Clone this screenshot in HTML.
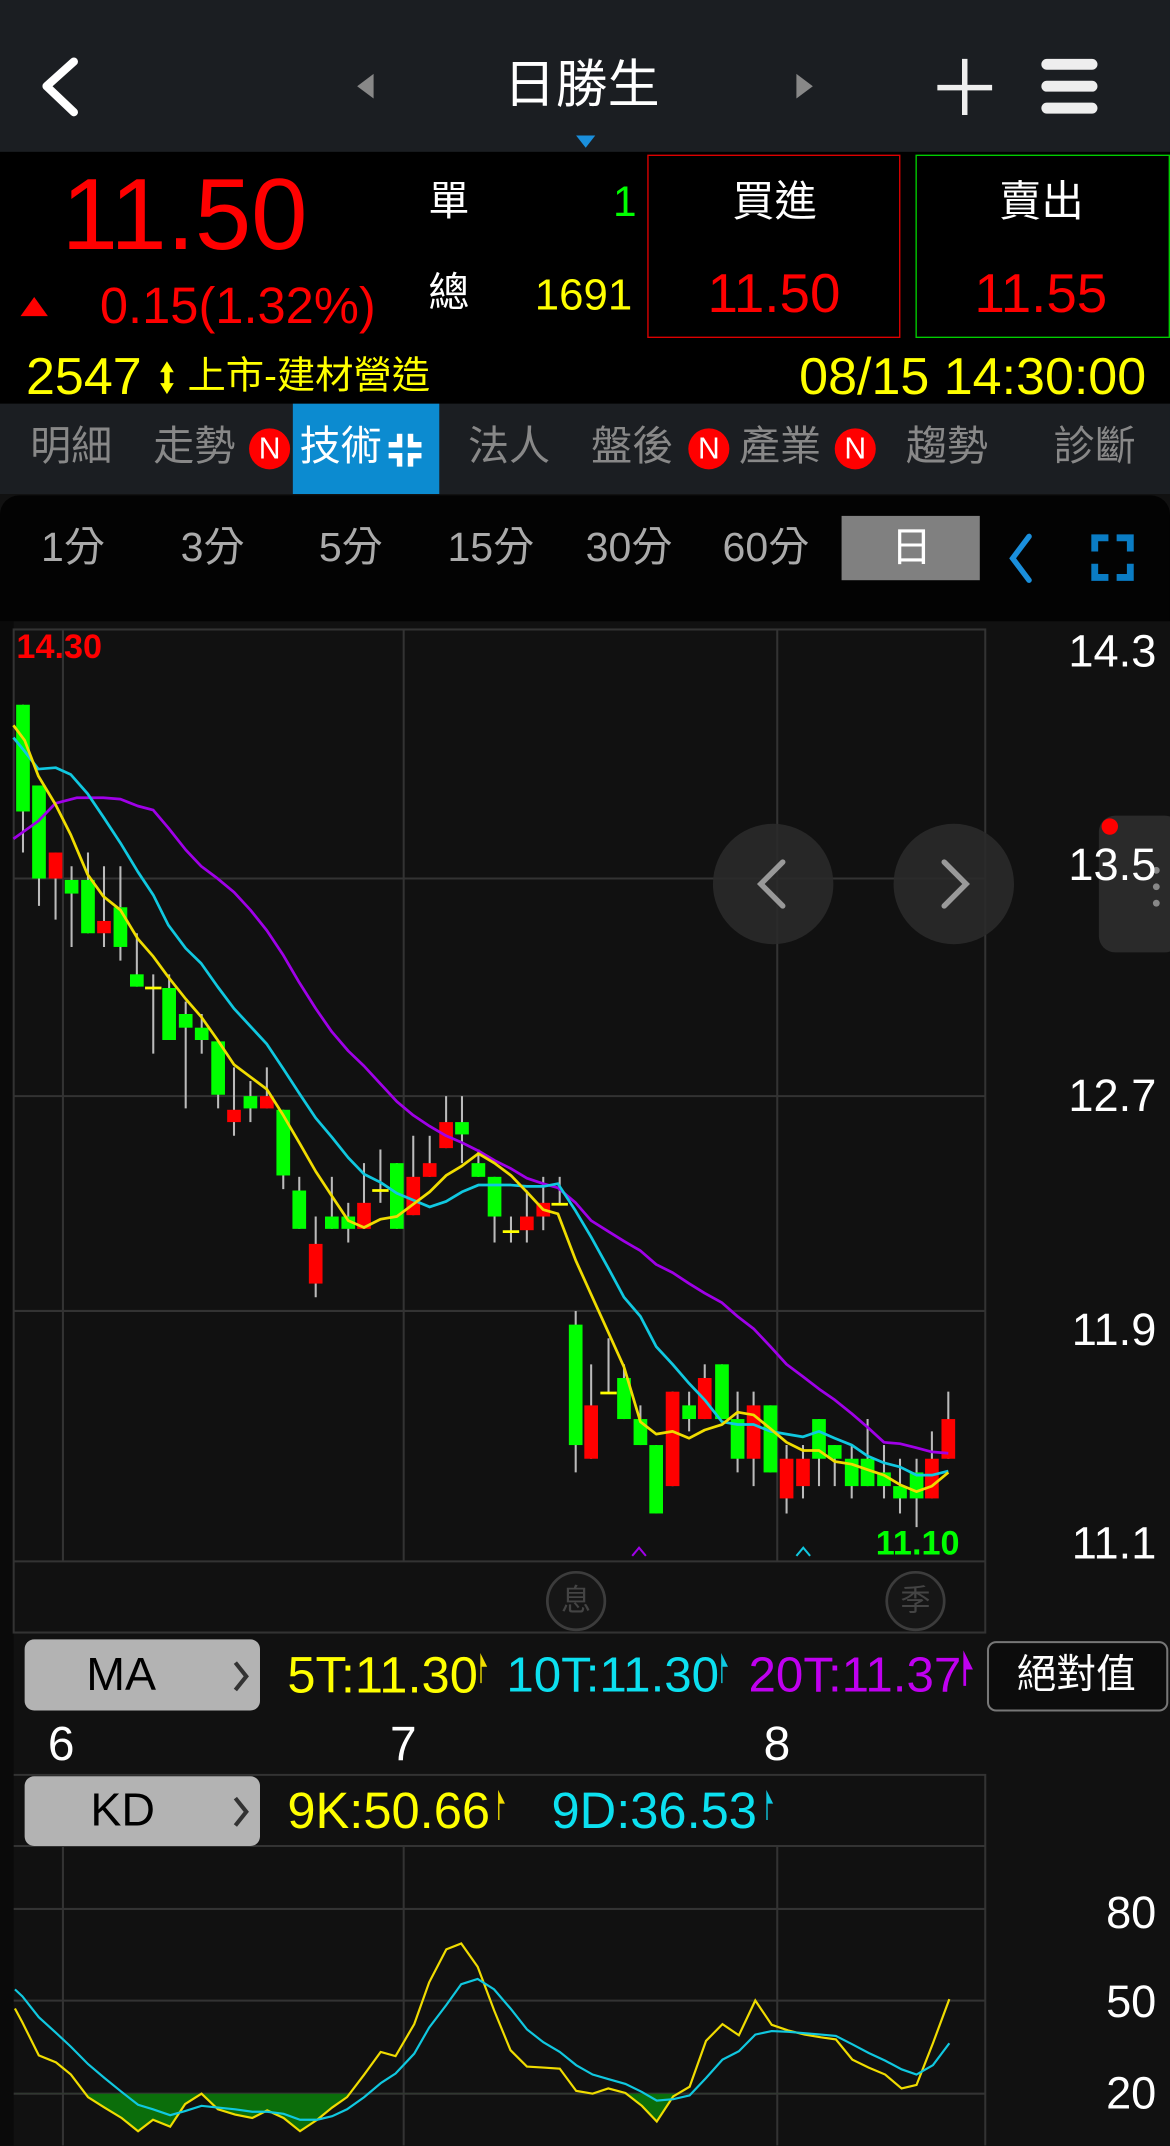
<!DOCTYPE html>
<html><head><meta charset="utf-8"><style>
html,body{margin:0;padding:0;background:#111;width:1170px;height:2145px;overflow:hidden}
#r{position:absolute;left:0;top:0;width:855px;height:1568px;transform:scale(1.368421);transform-origin:0 0;background:#111;font-family:"Liberation Sans","Noto Sans CJK TC",sans-serif;overflow:hidden}
.t{position:absolute;line-height:1;white-space:nowrap}
.n{position:absolute;width:30px;height:30px;border-radius:50%;background:#f00;color:#fff;font-size:22px;line-height:30px;text-align:center}
</style></head><body><div id="r">
<!-- header -->
<div style="position:absolute;left:0;top:0;width:855px;height:111px;background:#1b1e22"></div>
<svg style="position:absolute;left:0;top:0" width="855" height="111">
<path d="M54 45 L34 63 L54 82" stroke="#fff" stroke-width="6" fill="none" stroke-linecap="round" stroke-linejoin="round"/>
<path d="M273 54 L261 63 L273 72Z" fill="#888"/>
<path d="M582 54 L594 63 L582 72Z" fill="#888"/>
<path d="M705 43 V84 M685 64 H725" stroke="#eee" stroke-width="4"/>
<path d="M765 47 H798 M765 63 H798 M765 79 H798" stroke="#eee" stroke-width="8" stroke-linecap="round"/>
<path d="M421 99 H435 L428 108Z" fill="#1a8fdc"/>
</svg>
<div class="t" style="left:368px;top:44px;font-size:38px;color:#fff">日勝生</div>
<!-- quote -->
<div style="position:absolute;left:0;top:111px;width:855px;height:184px;background:#000"></div>
<div class="t" style="left:45px;top:120px;font-size:74px;color:#f00">11.50</div>
<svg style="position:absolute;left:14px;top:216px" width="22" height="16"><path d="M11 1 L21 15 H1Z" fill="#f00"/></svg>
<div class="t" style="left:73px;top:205px;font-size:37px;color:#f00">0.15(1.32%)</div>
<div class="t" style="left:313px;top:133px;font-size:30px;color:#fff">單</div>
<div class="t" style="left:448px;top:132px;font-size:31px;color:#0f0">1</div>
<div class="t" style="left:313px;top:200px;font-size:30px;color:#fff">總</div>
<div class="t" style="right:393px;top:199px;font-size:32px;color:#ff0">1691</div>
<div style="position:absolute;left:473px;top:113px;width:185px;height:134px;border:1px solid #d00;box-sizing:border-box"></div>
<div style="position:absolute;left:669px;top:113px;width:186px;height:134px;border:1px solid #0c0;box-sizing:border-box"></div>
<div class="t" style="left:535px;top:132px;font-size:31px;color:#fff">買進</div>
<div class="t" style="left:517px;top:195px;font-size:40px;color:#f00">11.50</div>
<div class="t" style="left:730px;top:132px;font-size:31px;color:#fff">賣出</div>
<div class="t" style="left:712px;top:195px;font-size:40px;color:#f00">11.55</div>
<div class="t" style="left:19px;top:257px;font-size:38px;color:#ff0">2547</div>
<svg style="position:absolute;left:115px;top:263px" width="14" height="26"><path d="M7 1 L12 9 H2Z M7 25 L12 17 H2Z" fill="#ff0"/><rect x="5" y="8" width="4" height="10" fill="#ff0"/></svg>
<div class="t" style="left:137px;top:261px;font-size:28px;color:#ff0">上市-建材營造</div>
<div class="t" style="left:584px;top:257px;font-size:38px;color:#ff0">08/15 14:30:00</div>
<!-- tabs -->
<div style="position:absolute;left:0;top:295px;width:855px;height:66px;background:#1b1e22"></div>
<div style="position:absolute;left:214px;top:295px;width:107px;height:66px;background:#0c8bd0"></div>
<div class="t" style="left:22px;top:312px;font-size:30px;color:#888">明細</div>
<div class="t" style="left:112px;top:312px;font-size:30px;color:#888">走勢</div>
<div class="n" style="left:182px;top:313px">N</div>
<div class="t" style="left:219px;top:312px;font-size:30px;color:#fff">技術</div>
<svg style="position:absolute;left:282px;top:315px" width="28" height="28"><path d="M10 2 V10 H2 M18 2 V10 H26 M10 26 V18 H2 M18 26 V18 H26" stroke="#fff" stroke-width="4" fill="none"/></svg>
<div class="t" style="left:342px;top:312px;font-size:30px;color:#888">法人</div>
<div class="t" style="left:432px;top:312px;font-size:30px;color:#888">盤後</div>
<div class="n" style="left:503px;top:313px">N</div>
<div class="t" style="left:540px;top:312px;font-size:30px;color:#888">產業</div>
<div class="n" style="left:610px;top:313px">N</div>
<div class="t" style="left:662px;top:312px;font-size:30px;color:#888">趨勢</div>
<div class="t" style="left:770px;top:312px;font-size:30px;color:#888">診斷</div>
<!-- period -->
<div style="position:absolute;left:0;top:362px;width:855px;height:92px;background:#030303;border-radius:14px 14px 0 0"></div>
<div style="position:absolute;left:615px;top:377px;width:101px;height:47px;background:#808080"></div>
<div class="t" style="left:30px;top:386px;font-size:30px;color:#aaa">1分</div>
<div class="t" style="left:132px;top:386px;font-size:30px;color:#aaa">3分</div>
<div class="t" style="left:233px;top:386px;font-size:30px;color:#aaa">5分</div>
<div class="t" style="left:327px;top:386px;font-size:30px;color:#aaa">15分</div>
<div class="t" style="left:428px;top:386px;font-size:30px;color:#aaa">30分</div>
<div class="t" style="left:528px;top:386px;font-size:30px;color:#aaa">60分</div>
<div class="t" style="left:651px;top:386px;font-size:30px;color:#fff">日</div>
<svg style="position:absolute;left:730px;top:385px" width="100" height="45">
<path d="M22 7 L10 23 L22 39" stroke="#1a8fdc" stroke-width="4" fill="none" stroke-linecap="round"/>
<path d="M70 18 V8 H80 M96 18 V8 H86 M70 27 V37 H80 M96 27 V37 H86" stroke="#0a7cc4" stroke-width="5" fill="none"/>
</svg>
<!-- chart -->
<svg style="position:absolute;left:0;top:0" width="855" height="1568">
<rect x="0" y="454" width="10" height="1114" fill="#0a0a0a"/>
<g stroke="#333" stroke-width="1.5" fill="none">
<rect x="10" y="460" width="710" height="733"/>
<path d="M10 642 H720 M10 801 H720 M10 958 H720 M10 1141 H720 M46 460 V1141 M295 460 V1141 M568 460 V1141"/>
<path d="M10 1297 H720 V1568 M10 1349 H720 M10 1395 H720 M10 1462 H720 M10 1530 H720 M46 1349 V1568 M295 1349 V1568 M568 1349 V1568"/>
</g>
<g id="c"></g>
<g fill="none" stroke-width="2" stroke-linejoin="round">
<polyline stroke="#a000e8" points="9.8,613 28,600 40.6,587 56,583 75.5,583 88,584 100.7,589 112,592 123,605 135.7,621 147,633 159,642 171,652 183,665 195,680 207,698 218.7,718 230.7,737 242.5,754 254.5,768 266,779 278,792 290,805 302,815 314,823 326,830 337.6,835 349.6,841 361.4,848 373.4,854 385,861 397,865 407.7,868 420.7,879 432,892 444.7,900 456,907 468,914 479.5,924 491.5,930 503.6,938 515,945 527.6,952 539,962 550.7,971 563,984 574.8,997 586.8,1006 598.5,1015 610,1023 622.4,1033 634,1043 646,1054 657.7,1055 669.8,1058 681,1061 693,1062"/>
<polyline stroke="#10c8e0" points="9.8,539 18,549 28,562 40.6,561 51.7,566 64,580 75.5,597 88,616 100.7,637 112,654 123,676 135.7,693 147,704 159,721 171,737 183,750 195,763 207,781 218.7,799 230.7,817 242.5,831 254.5,846 266,858 278,864 290,872 302,877 314,882 326,878 337.6,871 349.6,866 361.4,866 373.4,866 385,867 397,867 407.7,865 420.7,885 432,904 444.7,927 456,948 468,962 479.5,984 491.5,997 503.6,1011 515,1023 527.6,1039 539,1041 550.7,1041 563,1046 574.8,1048 586.8,1050 598.5,1046 610,1051 622.4,1056 634,1064 646,1069 657.7,1072 669.8,1078 681,1078 693,1075"/>
<polyline stroke="#f0dc00" points="9.8,530 18,541 28,567 40.6,588 51.7,610 64,639 75.5,655 88,665 100.7,686 112,699 123,714 135.7,730 147,743 159,760 171,778 183,787 195,796 207,815 218.7,835 230.7,856 242.5,874 254.5,892 266,897 278,891 290,889 302,880 314,871 326,859 337.6,852 349.6,843 361.4,850 373.4,859 385,871 397,884 407.7,887 420.7,921 432,946 444.7,974 456,999 468,1039 479.5,1048 491.5,1046 503.6,1051 515,1045 527.6,1041 539,1032 550.7,1034 563,1044 574.8,1054 586.8,1060 598.5,1060 610,1068 622.4,1070 634,1074 646,1078 657.7,1085 669.8,1090 681,1086 693,1076"/>
</g>
<path d="M462 1137 L467 1131 L472 1137" stroke="#a000e8" stroke-width="1.5" fill="none"/>
<path d="M582 1137 L587 1131 L592 1137" stroke="#10c8e0" stroke-width="1.5" fill="none"/>
<circle cx="565" cy="646" r="44" fill="#2a2a2a" opacity="0.9"/>
<circle cx="697" cy="646" r="44" fill="#2a2a2a" opacity="0.9"/>
<path d="M572 630 L556 646 L572 662" stroke="#999" stroke-width="4" fill="none" stroke-linecap="round"/>
<path d="M690 630 L706 646 L690 662" stroke="#999" stroke-width="4" fill="none" stroke-linecap="round"/>
<rect x="803" y="596" width="60" height="100" rx="12" fill="#2a2a2a"/>
<circle cx="811" cy="604" r="6" fill="#f00"/>
<circle cx="845" cy="636" r="2.5" fill="#888"/><circle cx="845" cy="648" r="2.5" fill="#888"/><circle cx="845" cy="660" r="2.5" fill="#888"/>
<circle cx="421" cy="1170" r="21" fill="#161616" stroke="#3c3c3c" stroke-width="2"/>
<circle cx="669" cy="1170" r="21" fill="#161616" stroke="#3c3c3c" stroke-width="2"/>
<!-- KD -->
<defs><clipPath id="kc"><rect x="0" y="1420" width="1400" height="300"/></clipPath></defs>
<g transform="translate(0,1169.3) scale(0.5454,0.254)">
<polygon clip-path="url(#kc)" fill="#0b6e0b" points="20,1420 20,1175 30,1215 52,1310 75,1330 95,1365 118,1430 140,1460 163,1490 185,1528 205,1495 228,1515 248,1450 270,1420 292,1465 315,1480 338,1490 358,1468 380,1490 402,1528 425,1495 445,1460 465,1430 488,1365 510,1300 530,1312 555,1220 575,1100 598,1005 618,988 640,1055 662,1180 684,1295 706,1342 728,1345 750,1348 772,1412 794,1420 815,1405 838,1418 860,1455 880,1500 902,1428 924,1400 946,1268 968,1220 990,1252 1012,1152 1034,1222 1056,1238 1078,1250 1100,1258 1120,1264 1142,1322 1164,1345 1186,1365 1208,1405 1228,1395 1250,1275 1272,1148 1272,1420"/>
<polyline fill="none" stroke="#f0dc00" stroke-width="1.6" vector-effect="non-scaling-stroke" points="20,1175 30,1215 52,1310 75,1330 95,1365 118,1430 140,1460 163,1490 185,1528 205,1495 228,1515 248,1450 270,1420 292,1465 315,1480 338,1490 358,1468 380,1490 402,1528 425,1495 445,1460 465,1430 488,1365 510,1300 530,1312 555,1220 575,1100 598,1005 618,988 640,1055 662,1180 684,1295 706,1342 728,1345 750,1348 772,1412 794,1420 815,1405 838,1418 860,1455 880,1500 902,1428 924,1400 946,1268 968,1220 990,1252 1012,1152 1034,1222 1056,1238 1078,1250 1100,1258 1120,1264 1142,1322 1164,1345 1186,1365 1208,1405 1228,1395 1250,1275 1272,1148"/>
<polyline fill="none" stroke="#10c8e0" stroke-width="1.6" vector-effect="non-scaling-stroke" points="20,1120 30,1140 52,1200 75,1245 95,1285 118,1335 140,1375 163,1415 185,1452 205,1465 228,1482 248,1470 270,1455 292,1460 315,1465 338,1472 358,1472 380,1478 402,1495 425,1495 445,1485 465,1465 488,1430 510,1390 530,1362 555,1305 575,1230 598,1165 618,1105 640,1090 662,1120 684,1175 706,1235 728,1272 750,1300 772,1338 794,1365 815,1378 838,1392 860,1415 880,1440 902,1436 924,1425 946,1375 968,1322 990,1298 1012,1250 1034,1240 1056,1242 1078,1246 1100,1250 1120,1254 1142,1278 1164,1303 1186,1325 1208,1350 1228,1365 1250,1338 1272,1275"/>
</g>
<rect x="18" y="1198" width="172" height="52" rx="7" fill="#b3b3b3"/>
<rect x="18" y="1298" width="172" height="51" rx="7" fill="#b3b3b3"/>
<path d="M172 1215 L180 1225 L172 1235 M172 1314 L180 1324 L172 1334" stroke="#333" stroke-width="3" fill="none"/>
<rect x="722" y="1200" width="131" height="50" rx="6" fill="#0c0c0c" stroke="#777" stroke-width="1.5"/>
<g fill="#f0dc00"><path d="M351 1208 L356 1218 H352 V1230 H351Z"/><path d="M364 1308 L369 1318 H365 V1330 H364Z"/></g>
<g fill="#10c8e0"><path d="M527 1208 L532 1218 H528 V1230 H527Z"/><path d="M560 1308 L565 1318 H561 V1330 H560Z"/></g>
<path d="M704 1206 L711 1220 H706 V1232 H704Z" fill="#c000f0"/>
</svg>
<div class="t" style="left:12px;top:461px;font-size:25px;color:#f00;font-weight:bold">14.30</div>
<div class="t" style="left:640px;top:1116px;font-size:25px;color:#0f0;font-weight:bold">11.10</div>
<div class="t" style="left:410px;top:1159px;font-size:22px;color:#444">息</div>
<div class="t" style="left:658px;top:1159px;font-size:22px;color:#444">季</div>
<div class="t" style="right:10px;top:459px;font-size:33px;color:#fff">14.3</div>
<div class="t" style="right:10px;top:615px;font-size:33px;color:#fff">13.5</div>
<div class="t" style="right:10px;top:784px;font-size:33px;color:#fff">12.7</div>
<div class="t" style="right:10px;top:955px;font-size:33px;color:#fff">11.9</div>
<div class="t" style="right:10px;top:1111px;font-size:33px;color:#fff">11.1</div>
<div class="t" style="left:63px;top:1207px;font-size:34px;color:#000">MA</div>
<div class="t" style="left:210px;top:1206px;font-size:37px;color:#ff0">5T:11.30</div>
<div class="t" style="left:370px;top:1206px;font-size:36px;color:#0ce0f0">10T:11.30</div>
<div class="t" style="left:547px;top:1206px;font-size:36px;color:#c000f0">20T:11.37</div>
<div class="t" style="left:743px;top:1210px;font-size:29px;color:#fff">絕對值</div>
<div class="t" style="left:35px;top:1257px;font-size:35px;color:#fff">6</div>
<div class="t" style="left:285px;top:1257px;font-size:35px;color:#fff">7</div>
<div class="t" style="left:558px;top:1257px;font-size:35px;color:#fff">8</div>
<div class="t" style="left:66px;top:1306px;font-size:34px;color:#000">KD</div>
<div class="t" style="left:210px;top:1305px;font-size:37px;color:#ff0">9K:50.66</div>
<div class="t" style="left:403px;top:1305px;font-size:37px;color:#0ce0f0">9D:36.53</div>
<div class="t" style="right:10px;top:1381px;font-size:33px;color:#fff">80</div>
<div class="t" style="right:10px;top:1446px;font-size:33px;color:#fff">50</div>
<div class="t" style="right:10px;top:1513px;font-size:33px;color:#fff">20</div>
</div>
<script>
var C=[[16.8,515,593,515,623,'G'],[28.5,574,642,574,662,'G'],[40.6,623,642,623,672,'R'],[52.3,643,653,633,692,'G'],[64.3,643,682,623,682,'G'],[76,673,682,633,692,'R'],[88,663,692,633,702,'G'],[100,712,721,682,721,'G'],[112,722,722,712,770,'D'],[123.6,722,760,712,760,'G'],[135.7,741,751,732,810,'G'],[147.4,751,760,741,770,'G'],[159.4,761,800,761,810,'G'],[171,811,820,780,830,'R'],[183,801,810,790,820,'G'],[195,801,810,780,810,'R'],[207,811,859,811,869,'G'],[218.7,870,898,860,898,'G'],[230.7,909,938,889,948,'R'],[242.5,889,898,860,898,'G'],[254.5,889,898,879,908,'G'],[266,879,898,850,898,'R'],[278,870,870,840,879,'D'],[290,850,898,850,898,'G'],[302,860,888,830,888,'R'],[314,850,860,830,860,'R'],[326,820,839,801,839,'R'],[337.6,820,829,801,850,'G'],[349.6,850,860,840,860,'G'],[361.4,860,889,860,908,'G'],[373.4,900,900,889,908,'D'],[385,889,899,870,908,'R'],[397,879,889,860,899,'R'],[409,880,880,860,880,'D'],
[420.7,968,1056,958,1076,'G'],[432,1027,1066,997,1066,'R'],[444.7,1018,1018,978,1018,'D'],[456,1007,1037,997,1037,'G'],[468,1037,1056,1027,1056,'G'],[479.5,1056,1106,1056,1106,'G'],[491.5,1017,1086,1017,1086,'R'],[503.6,1027,1037,1017,1046,'G'],[515,1007,1037,997,1037,'R'],[527.6,997,1037,997,1037,'G'],[539,1037,1066,1017,1076,'G'],[550.7,1027,1066,1017,1086,'R'],[563,1027,1076,1027,1076,'G'],[574.8,1066,1095,1056,1106,'R'],[586.8,1066,1086,1056,1095,'R'],[598.5,1037,1066,1037,1086,'G'],[610,1056,1066,1056,1086,'G'],[622.4,1066,1086,1056,1095,'G'],[634,1066,1086,1037,1086,'G'],[646,1076,1086,1056,1095,'G'],[657.7,1086,1095,1066,1106,'G'],[669.8,1076,1095,1066,1116,'G'],[681,1066,1095,1046,1095,'R'],[693,1037,1066,1017,1066,'R']];
var s='';C.forEach(function(c){var x=c[0];s+='<line x1="'+x+'" x2="'+x+'" y1="'+c[3]+'" y2="'+c[4]+'" stroke="#bbb" stroke-width="1.5"/>';
if(c[5]=='D')s+='<line x1="'+(x-6)+'" x2="'+(x+6)+'" y1="'+c[1]+'" y2="'+c[1]+'" stroke="#ff0" stroke-width="2"/>';
else s+='<rect x="'+(x-5)+'" y="'+c[1]+'" width="10" height="'+Math.max(3,c[2]-c[1])+'" fill="'+(c[5]=='G'?'#0f0':'#f00')+'"/>';});
document.getElementById('c').innerHTML=s;
</script>
</body></html>
